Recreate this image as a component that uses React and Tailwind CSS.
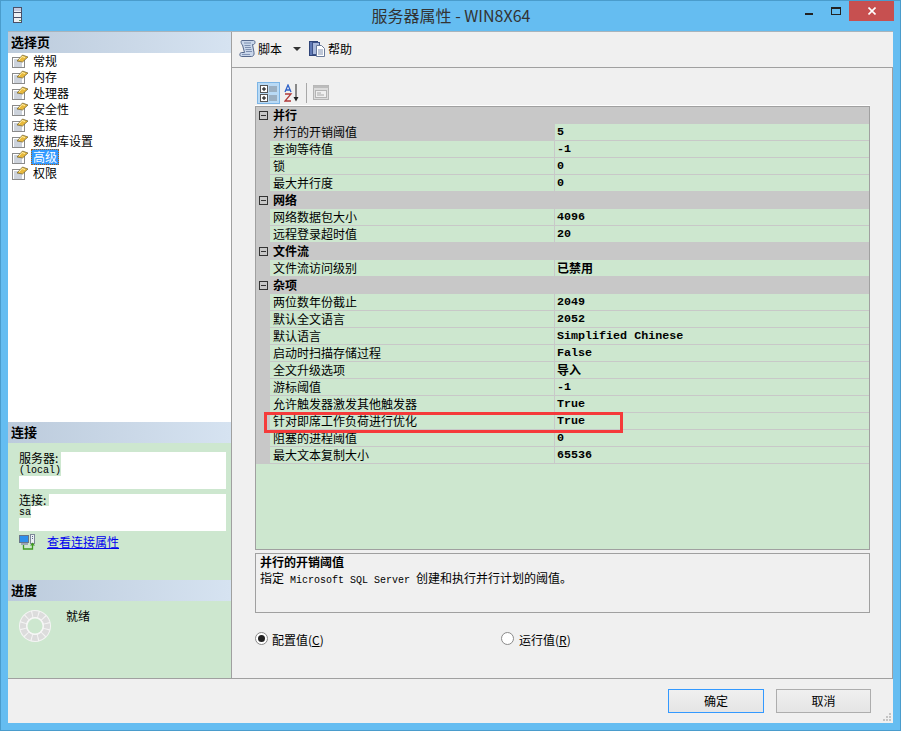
import React from "react";

const CJK = "font-['Noto_Sans_CJK_SC','Liberation_Sans',sans-serif]";
const MONO = "font-['Liberation_Mono','Noto_Sans_CJK_SC',monospace]";

function PageIcon() {
  return (
    <svg width="16" height="14" viewBox="0 0 16 14" className="shrink-0">
      <rect x="0.5" y="3.5" width="12" height="10" fill="#fff" stroke="#8a8a8a" />
      <path d="M2 6h8M2 8h8M2 10h8M2 12h8" stroke="#9aa6b8" strokeWidth="1" />
      <path d="M5 7 L10.500 1 L16 3 L10.500 8 Z" fill="#e8b93c" stroke="#6f6030" strokeWidth="0.7" />
      <path d="M7 6l3-3.500 3 1" fill="none" stroke="#fff2b0" strokeWidth="1" />
    </svg>
  );
}

function ScriptIcon() {
  return (
    <svg width="17" height="17" viewBox="0 0 17 17">
      <path d="M3 .5H14.500C16.500.5 16.500 4 14.500 4.500H13.500L15 12.500C15.500 15 14 16.500 12.500 16.500H2.500C.5 16.500 0 13 2.500 12.500H5.500L3.500 5C2 4 1.500.5 3 .5Z" fill="#c9d6ea" stroke="#56688c" strokeWidth="1" />
      <path d="M5 3h7M5.500 5.500h6M6 7.500h6M6.500 9.500h6M7 11.500h6" stroke="#7d8fb0" strokeWidth="1" />
      <path d="M3 14.500h8" stroke="#8496b8" strokeWidth="1" />
    </svg>
  );
}

function HelpIcon() {
  return (
    <svg width="16" height="16" viewBox="0 0 16 16">
      <rect x="0.500" y="0.500" width="8" height="14" fill="#5f78b4" stroke="#2f4478" />
      <rect x="3.500" y="1.500" width="7" height="12" fill="#a9b9dc" stroke="#3d5288" />
      <path d="M7.500 4.500h5l3 3v8h-8Z" fill="#fff" stroke="#6a7a9a" />
      <path d="M9 9h5M9 11h5M9 13h5" stroke="#7e8fb0" />
    </svg>
  );
}

function CategorizedIcon() {
  return (
    <svg width="17" height="17" viewBox="0 0 17 17">
      <rect x="0.500" y="0.500" width="7" height="7" fill="#fff" stroke="#555" />
      <path d="M2 4h4M4 2v4" stroke="#000" />
      <rect x="0.500" y="9.500" width="7" height="7" fill="#fff" stroke="#555" />
      <path d="M2 13h4M4 11v4" stroke="#000" />
      <path d="M9 2h8M9 4h8M9 6h8M9 11h8M9 13h8M9 15h8" stroke="#7f858d" />
    </svg>
  );
}

function SortIcon() {
  return (
    <svg width="15" height="18" viewBox="0 0 15 18">
      <path d="M1 8 4 1l3 7M2.200 6h3.600" fill="none" stroke="#2f62c8" strokeWidth="1.300" />
      <path d="M1 10h6L1 17h6" fill="none" stroke="#b03a3a" strokeWidth="1.300" />
      <path d="M12 0v14" stroke="#222" strokeWidth="1" />
      <path d="M9.500 13h5L12 17.500Z" fill="#222" />
    </svg>
  );
}

function PropPagesIcon() {
  return (
    <svg width="16" height="15" viewBox="0 0 16 15">
      <rect x="0.500" y="0.500" width="15" height="14" fill="#dcdcdc" stroke="#b4b4b4" />
      <rect x="0.500" y="0.500" width="15" height="2.500" fill="#bcbcbc" />
      <rect x="2.500" y="5.500" width="11" height="7" fill="#efefef" stroke="#b4b4b4" />
      <path d="M4 8h4M4 10h7" stroke="#a8a8a8" />
    </svg>
  );
}

function ConnIcon() {
  return (
    <svg width="17" height="16" viewBox="0 0 17 16">
      <rect x="0.500" y="1.500" width="9" height="7" fill="#2f90ec" stroke="#68758a" />
      <rect x="2" y="9" width="7" height="2" fill="#9aa5b5" />
      <rect x="11.500" y="0.500" width="4" height="9" fill="#eceff4" stroke="#7d8798" />
      <path d="M13.500 2v1M13.500 4v1" stroke="#5a6a88" />
      <path d="M4.500 11v4h9v-4" fill="none" stroke="#3f9a22" strokeWidth="1.300" />
      <path d="M11 11.500h5L13.500 8.500Z" fill="#3f9a22" />
    </svg>
  );
}

function Ring() {
  return (
    <svg width="32" height="32" viewBox="0 0 32 32">
      <circle cx="16" cy="16" r="16" fill="#f4f4f4" />
      <circle cx="16" cy="16" r="12" fill="none" stroke="#dcdcdc" strokeWidth="6" strokeDasharray="5.280 1" strokeDashoffset="2.640" />
      <circle cx="16" cy="16" r="9" fill="#f6f6f6" />
      <circle cx="16" cy="16" r="7.500" fill="#cde7cf" />
    </svg>
  );
}

function ServerIcon() {
  return (
    <svg width="10" height="16" viewBox="0 0 10 16">
      <rect x="0.500" y="0.500" width="8" height="15" fill="#eef0f4" stroke="#4a5068" />
      <path d="M1 5.500h7M1 10.500h7" stroke="#4a5068" />
      <rect x="1" y="1" width="7" height="3" fill="#c7cbe0" />
      <rect x="6" y="13" width="2" height="1" fill="#58a048" />
    </svg>
  );
}

const navItems = ["常规", "内存", "处理器", "安全性", "连接", "数据库设置", "高级", "权限"];

function Header({ children }) {
  return (
    <div className="h-[21px] shrink-0 flex items-center pl-[3px] pb-[3px] bg-gradient-to-r from-[#bccbdc] to-[#d6e3f1] text-[13px] font-bold text-black leading-none">
      {children}
    </div>
  );
}

function CatRow({ label }) {
  return (
    <div className="h-[17px] flex items-center bg-[#c8c8c8] text-[12px] leading-none font-bold">
      <span className="ml-[3px] w-[9px] h-[9px] border border-[#333] flex items-center justify-center shrink-0">
        <span className="w-[5px] h-px bg-[#333]" />
      </span>
      <span className="ml-[5px] mb-[2px]">{label}</span>
    </div>
  );
}

function PropRow({ name, value, selected, cjk }) {
  return (
    <div className="h-[17px] flex bg-[#c8c8c8] text-[12px] leading-none">
      <div className="w-[14px] shrink-0" />
      <div
        className={`w-[284px] shrink-0 pl-[3px] flex items-center border-b border-[#c8c8c8] ${
          selected ? "bg-[#c8c8c8]" : "bg-[#cde7cf]"
        }`}
      >
        {name}
      </div>
      <div className="w-px bg-[#c8c8c8] shrink-0" />
      <div className={`flex-1 pl-[2px] flex items-center bg-[#cde7cf] border-b border-[#c8c8c8] font-bold ${cjk ? "" : `${MONO} text-[11.700px] pt-[2px]`}`}>
        {value}
      </div>
    </div>
  );
}

const grid = [
  ["c", "并行"],
  ["p", "并行的开销阈值", "5", true],
  ["p", "查询等待值", "-1"],
  ["p", "锁", "0"],
  ["p", "最大并行度", "0"],
  ["c", "网络"],
  ["p", "网络数据包大小", "4096"],
  ["p", "远程登录超时值", "20"],
  ["c", "文件流"],
  ["p", "文件流访问级别", "已禁用", false, true],
  ["c", "杂项"],
  ["p", "两位数年份截止", "2049"],
  ["p", "默认全文语言", "2052"],
  ["p", "默认语言", "Simplified Chinese"],
  ["p", "启动时扫描存储过程", "False"],
  ["p", "全文升级选项", "导入", false, true],
  ["p", "游标阈值", "-1"],
  ["p", "允许触发器激发其他触发器", "True"],
  ["p", "针对即席工作负荷进行优化", "True"],
  ["p", "阻塞的进程阈值", "0"],
  ["p", "最大文本复制大小", "65536"],
];

function Radio({ checked }) {
  return (
    <span className="w-[13px] h-[13px] rounded-full border border-[#8a8a8a] bg-white flex items-center justify-center shrink-0">
      {checked && <span className="w-[7px] h-[7px] rounded-full bg-[#222]" />}
    </span>
  );
}

function Button({ children, focus, w }) {
  return (
    <button
      className={`${w} h-[24px] border bg-gradient-to-b from-[#f0f0f0] to-[#e5e5e5] text-[12px] leading-none text-black ${
        focus ? "border-[#3399ff]" : "border-[#adadad]"
      }`}
    >
      {children}
    </button>
  );
}

export default function App() {
  return (
    <div className={`${CJK} relative w-[901px] h-[731px] bg-[#65bdf1] border border-[#4a9ccc] text-black overflow-hidden flex flex-col`}>
      {/* Title bar */}
      <div className="h-[30px] shrink-0 flex items-start relative">
        <div className="pl-[12px] pt-[6px]"><ServerIcon /></div>
        <div className="flex-1 text-center pt-[4px] text-[16px] leading-[20px] text-[#333] pl-[78px]">服务器属性 - WIN8X64</div>
        <div className="flex items-start pr-[6px]">
          <div className="w-[14px] h-[20px] relative mr-[16px]"><span className="block absolute left-[4px] top-[12px] w-[8px] h-[2px] bg-[#222]" /></div>
          <div className="w-[8px] h-[5px] mt-[6px] mr-[8px] border border-[#222] border-t-2 box-content" />
          <div className="w-[45px] h-[20px] bg-[#c75050] flex items-center justify-center">
            <svg width="8" height="8" viewBox="0 0 8 8"><path d="M0.500 0.500l7 7M7.500 0.500l-7 7" stroke="#fff" strokeWidth="1.600" /></svg>
          </div>
        </div>
      </div>

      {/* Client */}
      <div className="ml-[7px] mr-[7px] h-[692px] shrink-0 bg-[#f0f0f0] border-t border-[#a8b4bc] flex flex-col">
        <div className="h-[647px] shrink-0 flex border-b border-[#a0a0a0]">
          {/* Left */}
          <div className="w-[224px] shrink-0 border-r border-[#a0a0a0] flex flex-col">
            <Header>选择页</Header>
            <div className="bg-white h-[369px] shrink-0 pl-[4px] text-[12px]">
              {navItems.map((n) => (
                <div key={n} className="h-[16px] flex items-center leading-none">
                  <PageIcon />
                  {n === "高级" ? (
                    <span className="ml-[3px] px-px h-[16px] flex items-center bg-[#3399ff] text-white border border-dotted border-[#b06010]">{n}</span>
                  ) : (
                    <span className="ml-[5px]">{n}</span>
                  )}
                </div>
              ))}
            </div>
            <Header>连接</Header>
            <div className="h-[137px] shrink-0 bg-[#cde7cf] px-[11px] pt-[9px] text-[12px] leading-none">
              <div className="bg-white h-[37px] w-[207px]">
                <div className="bg-[#cde7cf] w-[42px] h-[12px] flex items-center pb-px leading-[11px]">服务器:</div>
                <div className={`bg-[#cde7cf] w-fit h-[12px] ${MONO} text-[10px] flex items-end`}>(local)</div>
              </div>
              <div className="bg-white h-[37px] w-[207px] mt-[5px]">
                <div className="bg-[#cde7cf] w-[30px] h-[12px] flex items-center pb-px leading-[11px]">连接:</div>
                <div className={`bg-[#cde7cf] w-fit h-[12px] ${MONO} text-[10px] flex items-end`}>sa</div>
              </div>
              <div className="flex items-center mt-[3px] h-[16px]">
                <ConnIcon />
                <span className="ml-[11px] text-[#0000ee] underline">查看连接属性</span>
              </div>
            </div>
            <Header>进度</Header>
            <div className="flex-1 bg-[#cde7cf] pl-[11px] pt-[9px] flex items-start text-[12px] leading-none">
              <Ring />
              <span className="ml-[15px]">就绪</span>
            </div>
          </div>

          {/* Right */}
          <div className="flex-1 flex flex-col">
            <div className="h-[36px] shrink-0 border-b border-[#a0a0a0] flex items-center pl-[7px] pb-[2px] text-[12px] leading-none">
              <ScriptIcon />
              <span className="ml-[2px]">脚本</span>
              <span className="ml-[11px] w-0 h-0 border-x-[4px] border-x-transparent border-t-[4px] border-t-[#333]" />
              <span className="ml-[8px] flex"><HelpIcon /></span>
              <span className="ml-[3px]">帮助</span>
            </div>
            <div className="flex-1 border-r border-[#a0a0a0] pl-[23px] pr-[22px] flex flex-col">
              <div className="h-[38px] shrink-0 pt-[14px] flex items-start pl-[2px] border-b border-white">
                <span className="w-[23px] h-[22px] bg-[#b9daf5] border border-[#7db5e5] flex items-center justify-center"><CategorizedIcon /></span>
                <span className="ml-[4px] mt-[2px] flex"><SortIcon /></span>
                <span className="ml-[7px] mt-px w-px h-[20px] bg-[#a8a8a8]" />
                <span className="ml-[6px] mt-[3px] flex"><PropPagesIcon /></span>
              </div>
              <div className="h-[444px] shrink-0 border border-[#a0a0a0] bg-[#cde7cf]">
                {grid.map((r) =>
                  r[0] === "c" ? (
                    <CatRow key={r[1]} label={r[1]} />
                  ) : (
                    <PropRow key={r[1]} name={r[1]} value={r[2]} selected={r[3]} cjk={r[4]} />
                  )
                )}
              </div>
              <div className="mt-[3px] h-[60px] shrink-0 border border-[#a0a0a0] px-[4px] text-[12px] leading-[16px]">
                <div className="font-bold">并行的开销阈值</div>
                <div className="whitespace-pre">
                  指定<span className={`${MONO} text-[10px]`}> Microsoft SQL Server </span>创建和执行并行计划的阈值。
                </div>
              </div>
              <div className="mt-[18px] flex items-center text-[12px] leading-none h-[15px]">
                <div className="w-[246px] flex items-center">
                  <Radio checked />
                  <span className="ml-[4px] mt-[2px]">配置值(<span className="underline">C</span>)</span>
                </div>
                <Radio />
                <span className="ml-[5px] mt-[2px]">运行值(<span className="underline">R</span>)</span>
              </div>
            </div>
          </div>
        </div>

        {/* Footer */}
        <div className="flex-1 relative flex justify-end pr-[22px] pt-[10px] gap-[12px]">
          <Button focus w="w-[96px]">确定</Button>
          <Button w="w-[95px]">取消</Button>
          <svg width="8" height="8" viewBox="0 0 8 8" className="absolute right-[2px] bottom-[2px]">
            <path d="M6 0h2v2H6zM3 3h2v2H3zM6 3h2v2H6zM0 6h2v2H0zM3 6h2v2H3zM6 6h2v2H6z" fill="#c4c4c4" />
          </svg>
        </div>
      </div>

      {/* Red annotation */}
      <div className="absolute left-[263px] top-[411px] w-[359px] h-[21px] border-[3px] border-[#f53a3a]" />
    </div>
  );
}
